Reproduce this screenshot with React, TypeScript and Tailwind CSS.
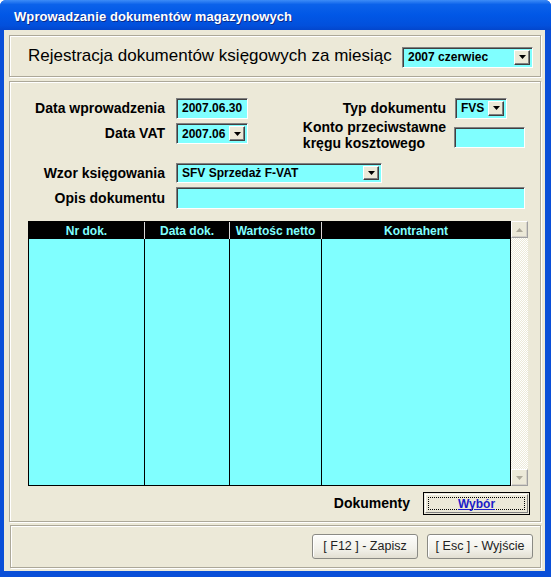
import React from 'react';

const sunken =
  'border border-t-[#808080] border-l-[#808080] border-b-white border-r-white shadow-[inset_1px_1px_0_#404040]';
const etched = 'border border-[#aca899] shadow-[inset_1px_1px_0_#ffffff,1px_1px_0_#ffffff]';

function DropButton() {
  return (
    <div className="flex h-full w-[16px] shrink-0 items-center justify-center border border-t-white border-l-white border-b-[#404040] border-r-[#404040] bg-[#ece9d8] shadow-[inset_-1px_-1px_0_#808080]">
      <svg width="7" height="4" viewBox="0 0 7 4">
        <path d="M0 0h7L3.5 4z" fill="#000" />
      </svg>
    </div>
  );
}

function Combo({ value, className }: { value: string; className: string }) {
  return (
    <div className={`flex items-center bg-[#80ffff] p-[2px] pl-[1px] ${sunken} ${className}`}>
      <span className="flex-1 truncate pl-[4px] text-[12px] font-bold text-black">{value}</span>
      <DropButton />
    </div>
  );
}

function Field({ value, className }: { value?: string; className: string }) {
  return (
    <div className={`flex items-center bg-[#80ffff] ${sunken} ${className}`}>
      {value && <span className="pl-[5px] text-[12px] font-bold text-black">{value}</span>}
    </div>
  );
}

function Label({ children, className = '' }: { children: React.ReactNode; className?: string }) {
  return <div className={`text-[14px] font-bold text-black ${className}`}>{children}</div>;
}

function ScrollArrow({ up }: { up?: boolean }) {
  return (
    <div className="flex h-[17px] w-[17px] items-center justify-center border border-t-white border-l-white border-b-[#a0a0a0] border-r-[#a0a0a0] bg-[#ece9d8] shadow-[inset_-1px_-1px_0_#d4d0c8]">
      <svg width="7" height="4" viewBox="0 0 7 4" className={up ? 'rotate-180' : ''}>
        <path d="M0 0h7L3.5 4z" fill="#aca899" />
      </svg>
    </div>
  );
}

const columns = [
  { name: 'Nr dok.', w: 'w-[116px]' },
  { name: 'Data dok.', w: 'w-[85px]' },
  { name: 'Wartośc netto', w: 'w-[92px]' },
  { name: 'Kontrahent', w: 'w-[189px]' },
];

function XpButton({ children }: { children: React.ReactNode }) {
  return (
    <button className="flex h-[25px] w-[106px] items-center justify-center rounded-[3px] border border-[#8a8a84] bg-[linear-gradient(180deg,#fdfdfb_0%,#f2f1ea_60%,#e2dfd2_100%)] text-[12.5px] text-[#222] shadow-[inset_1px_1px_0_#ffffff]">
      {children}
    </button>
  );
}

export default function App() {
  return (
    <div className="h-[577px] w-[551px] bg-white font-['Liberation_Sans',Arial,sans-serif]">
      <div className="flex h-full w-full flex-col rounded-t-[6px] bg-[#0a4fd8]">
        <div className="flex h-[30px] items-center rounded-t-[6px] bg-[linear-gradient(180deg,#3d8cf7_0%,#0b62ea_15%,#0157e6_50%,#0250dc_85%,#0346cc_100%)] pl-[14px] pt-[3px]">
          <span className="text-[13px] font-bold tracking-[0.1px] text-white [text-shadow:1px_1px_0_#0a2a8a]">
            Wprowadzanie dokumentów magazynowych
          </span>
        </div>

        <div className="mb-[6px] ml-[4px] mr-[6px] flex flex-1 flex-col bg-[#ece9d8] pl-[5px] pr-[4px] pt-[5px]">
          {/* header */}
          <div className={`flex h-[42px] items-center pl-[18px] pr-[7px] pt-[2px] ${etched}`}>
            <span className="mb-[3px] flex-1 text-[17px] text-black">Rejestracja dokumentów księgowych za miesiąc</span>
            <Combo value="2007 czerwiec" className="h-[21px] w-[131px]" />
          </div>

          {/* main */}
          <div className={`mt-[4px] flex h-[441px] flex-col pt-[15px] ${etched}`}>
            <div className="flex h-[22px] items-center pr-[33px]">
              <Label className="w-[155px] text-right">Data wprowadzenia</Label>
              <Field value="2007.06.30" className="ml-[11px] h-[21px] w-[72px]" />
              <Label className="ml-auto">Typ dokumentu</Label>
              <Combo value="FVS" className="ml-[9px] h-[21px] w-[52px]" />
            </div>

            <div className="flex h-[32px] items-start pr-[15px]">
              <div className="mt-[4px] flex h-[21px] items-center">
                <Label className="w-[155px] text-right">Data VAT</Label>
                <Combo value="2007.06" className="ml-[11px] h-[21px] w-[72px]" />
              </div>
              <div className="ml-auto flex items-start">
                <Label className="whitespace-nowrap leading-[16px]">
                  Konto przeciwstawne
                  <br />
                  kręgu kosztowego
                </Label>
                <Field className="ml-[8px] mt-[8px] h-[21px] w-[71px]" />
              </div>
            </div>

            <div className="mt-[12px] flex h-[20px] items-center">
              <Label className="w-[155px] text-right">Wzor księgowania</Label>
              <Combo value="SFV Sprzedaż F-VAT" className="ml-[11px] h-[20px] w-[206px]" />
            </div>

            <div className="mt-[4px] flex h-[22px] items-center">
              <Label className="w-[155px] text-right">Opis dokumentu</Label>
              <Field className="ml-[11px] h-[22px] w-[349px]" />
            </div>

            {/* grid */}
            <div className="ml-[18px] mt-[12px] flex h-[265px] w-[500px]">
              <div className="flex border border-r-0 border-black">
                {columns.map((c, i) => (
                  <div key={c.name} className={`flex flex-col ${c.w}`}>
                    <div
                      className={`flex h-[17px] items-center justify-center border-r bg-black text-[12px] font-bold text-[#80ffff] ${
                        i === columns.length - 1 ? 'border-black' : 'border-[#d8d8d8]'
                      }`}
                    >
                      {c.name}
                    </div>
                    <div className="flex-1 border-r border-black bg-[#80ffff]" />
                  </div>
                ))}
              </div>
              <div className="flex w-[17px] flex-col">
                <ScrollArrow up />
                <div className="flex-1 bg-[repeating-conic-gradient(#ffffff_0%_25%,#ece9d8_0%_50%)] bg-[length:2px_2px]" />
                <ScrollArrow />
              </div>
            </div>

            <div className="mt-[6px] flex h-[23px] items-center justify-end pr-[10px]">
              <Label className="mr-[13px]">Dokumenty</Label>
              <button className="flex h-[23px] w-[107px] items-center justify-center border border-black bg-[#ece9d8] p-[1px]">
                <span className="flex h-full w-full items-center justify-center border border-t-white border-l-white border-b-[#808080] border-r-[#808080] p-[2px]">
                  <span className="flex h-full w-full items-center justify-center border border-dotted border-black">
                    <span className="text-[12px] font-bold text-[#1c1cc8] underline">Wybór</span>
                  </span>
                </span>
              </button>
            </div>
          </div>

          {/* footer */}
          <div className={`ml-[1px] mt-[3px] flex h-[43px] items-center justify-end gap-[9px] pr-[7px] ${etched}`}>
            <XpButton>[ F12 ] - Zapisz</XpButton>
            <XpButton>[ Esc ] - Wyjście</XpButton>
          </div>
        </div>
      </div>
    </div>
  );
}
